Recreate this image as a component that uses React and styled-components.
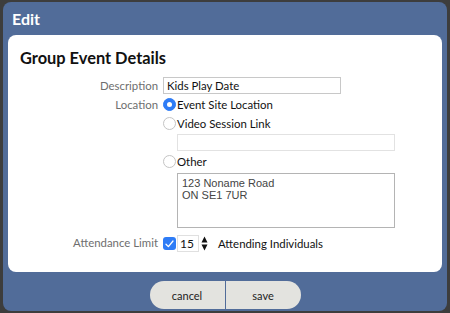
import React from "react";
import styled, { createGlobalStyle } from "styled-components";

const colors = {
  backdrop: "#3d3d3d",
  dialog: "#516c99",
  label: "#6e6e6e",
  accent: "#2e7cf6",
  button: "#e3e3df",
};

const GlobalStyle = createGlobalStyle`
  html, body {
    margin: 0;
    padding: 0;
    background: ${colors.backdrop};
    font-family: Lato, "Noto Sans", sans-serif;
  }
`;

const Screen = styled.div`
  width: 450px;
  height: 313px;
  padding: 2px 3px 2px 3px;
  box-sizing: border-box;
`;

const Dialog = styled.div`
  background: ${colors.dialog};
  border-radius: 8px;
  height: 309px;
  display: flex;
  flex-direction: column;
  padding: 0 5px;
  box-sizing: border-box;
`;

const Title = styled.h1`
  margin: 0;
  height: 33px;
  line-height: 33px;
  padding-left: 4px;
  color: #fff;
  font-size: 16px;
  font-weight: 700;
`;

const Panel = styled.div`
  background: #fff;
  border-radius: 8px;
  height: 237px;
  padding: 13px 12px 0 12px;
  box-sizing: border-box;
`;

const Heading = styled.h2`
  margin: 0 0 9px 0;
  font-size: 16.4px;
  font-weight: 700;
  color: #111;
  line-height: 20px;
`;

const Form = styled.div`
  display: grid;
  grid-template-columns: 138px 1fr;
  column-gap: 5px;
  align-items: start;
  font-size: 11.4px;
`;

const Label = styled.div`
  text-align: right;
  color: ${colors.label};
  line-height: ${(p) => p.$lh || 16}px;
  margin-top: ${(p) => p.$mt || 0}px;
`;

const Field = styled.div`
  display: flex;
  flex-direction: column;
  margin-bottom: ${(p) => p.$mb || 0}px;
`;

const TextInput = styled.div`
  width: ${(p) => p.$w}px;
  height: 17px;
  box-sizing: border-box;
  border: 1px solid ${(p) => (p.$light ? "#e2e2e2" : "#c8c8c8")};
  line-height: 15px;
  padding-left: 3px;
  color: #111;
  margin-left: ${(p) => p.$indent || 0}px;
  margin-top: ${(p) => p.$mt || 0}px;
  margin-bottom: ${(p) => p.$mb || 0}px;
`;

const Option = styled.div`
  display: flex;
  align-items: center;
  height: 19px;
  color: #111;
  gap: 1px;
`;

const Radio = styled.span`
  width: 13px;
  height: 13px;
  border-radius: 50%;
  box-sizing: border-box;
  display: inline-flex;
  align-items: center;
  justify-content: center;
  background: ${(p) => (p.$checked ? colors.accent : "#fff")};
  border: 1px solid ${(p) => (p.$checked ? colors.accent : "#c4c4c4")};

  &::after {
    content: "";
    width: 5px;
    height: 5px;
    border-radius: 50%;
    background: #fff;
    display: ${(p) => (p.$checked ? "block" : "none")};
  }
`;

const Address = styled.div`
  margin-left: 14px;
  margin-top: 2px;
  width: 218px;
  height: 55px;
  box-sizing: border-box;
  border: 1px solid #b4b4b4;
  padding: 3px 4px;
  font-family: "Liberation Sans", Arial, sans-serif;
  font-size: 11px;
  line-height: 12px;
  color: #444;
  white-space: pre-line;
`;

const LimitRow = styled.div`
  display: flex;
  align-items: center;
  color: #111;
  margin-top: 7px;
`;

const Check = styled.span`
  width: 13px;
  height: 13px;
  border-radius: 3px;
  background: ${colors.accent};
  display: inline-flex;
  align-items: center;
  justify-content: center;
`;

const NumberBox = styled.div`
  width: 22px;
  height: 17px;
  border: 1px solid #e0e0e0;
  box-sizing: border-box;
  margin-left: 1px;
  padding-left: 2px;
  line-height: 15px;
  font-size: 12px;
`;

const Spinner = styled.svg`
  margin-left: 2px;
`;

const LimitText = styled.span`
  margin-left: 10px;
`;

const Footer = styled.div`
  display: flex;
  justify-content: center;
  padding-top: 9px;
`;

const Pill = styled.div`
  display: flex;
  height: 28px;
  border-radius: 14px;
  overflow: hidden;
  background: ${colors.button};
`;

const PillButton = styled.button`
  border: none;
  background: transparent;
  width: ${(p) => p.$w}px;
  height: 28px;
  font-family: Lato, "Noto Sans", sans-serif;
  font-size: 11px;
  color: #222;
  padding: 0;
  & + & {
    border-left: 1px solid ${colors.dialog};
  }
`;

export default function App() {
  return (
    <>
      <GlobalStyle />
      <Screen>
        <Dialog>
          <Title>Edit</Title>
          <Panel>
            <Heading>Group Event Details</Heading>
            <Form>
              <Label $lh={17}>Description</Label>
              <Field $mb={1}>
                <TextInput $w={178}>Kids Play Date</TextInput>
              </Field>

              <Label $lh={19}>Location</Label>
              <Field>
                <Option>
                  <Radio $checked />
                  Event Site Location
                </Option>
                <Option>
                  <Radio />
                  Video Session Link
                </Option>
                <TextInput $w={218} $indent={14} $light $mt={1} $mb={1} />
                <Option>
                  <Radio />
                  Other
                </Option>
                <Address>{"123 Noname Road\nON SE1 7UR"}</Address>
              </Field>

              <Label $mt={7} $lh={15}>Attendance Limit</Label>
              <LimitRow>
                <Check>
                  <svg width="9" height="8" viewBox="0 0 9 8">
                    <path d="M1 4.2 L3.4 6.6 L8 1" fill="none" stroke="#fff" strokeWidth="1.3" strokeLinecap="round" strokeLinejoin="round" />
                  </svg>
                </Check>
                <NumberBox>15</NumberBox>
                <Spinner width="7" height="15" viewBox="0 0 7 15">
                  <path d="M3.5 0.5 L6.5 6.5 L0.5 6.5 Z" fill="#111" />
                  <path d="M0.5 8.5 L6.5 8.5 L3.5 14.5 Z" fill="#111" />
                </Spinner>
                <LimitText>Attending Individuals</LimitText>
              </LimitRow>
            </Form>
          </Panel>
          <Footer>
            <Pill>
              <PillButton $w={75}>cancel</PillButton>
              <PillButton $w={76}>save</PillButton>
            </Pill>
          </Footer>
        </Dialog>
      </Screen>
    </>
  );
}
